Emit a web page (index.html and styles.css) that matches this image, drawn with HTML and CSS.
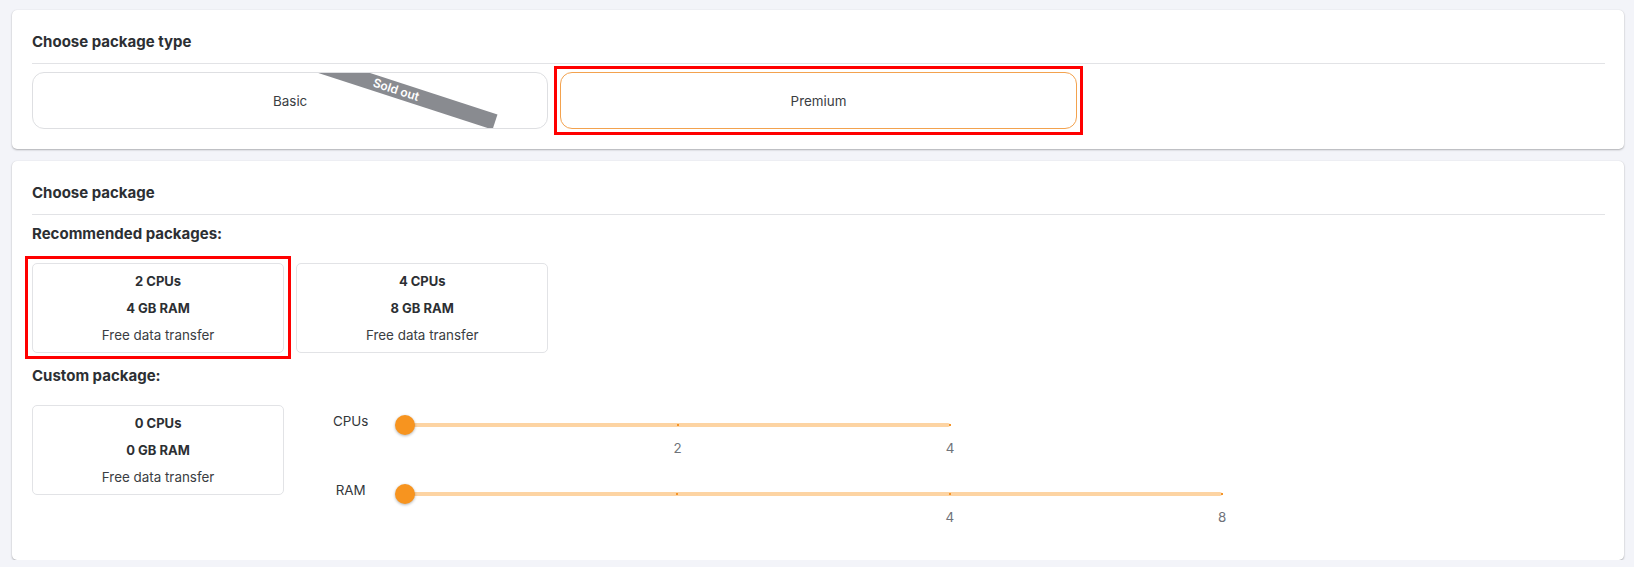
FILE: index.html
```html
<!DOCTYPE html>
<html lang="en">
<head>
<meta charset="utf-8">
<title>Choose package</title>
<link rel="stylesheet" href="styles.css">
</head>
<body>
<div class="page">
  <section class="card">
    <h2 class="card-title">Choose package type</h2>
    <div class="grid6">
      <button class="type-option has-ribbon" type="button">Basic<span class="ribbon">Sold out</span></button>
      <button class="type-option selected highlight" type="button">Premium</button>
    </div>
  </section>

  <section class="card">
    <h2 class="card-title">Choose package</h2>
    <h3 class="sub-title">Recommended packages:</h3>
    <div class="grid6 rec-grid">
      <div class="pkg highlight-pkg">
        <div class="pkg-line strong">2 CPUs</div>
        <div class="pkg-line strong">4 GB RAM</div>
        <div class="pkg-line">Free data transfer</div>
      </div>
      <div class="pkg">
        <div class="pkg-line strong">4 CPUs</div>
        <div class="pkg-line strong">8 GB RAM</div>
        <div class="pkg-line">Free data transfer</div>
      </div>
    </div>
    <h3 class="sub-title">Custom package:</h3>
    <div class="grid6">
      <div class="pkg">
        <div class="pkg-line strong">0 CPUs</div>
        <div class="pkg-line strong">0 GB RAM</div>
        <div class="pkg-line">Free data transfer</div>
      </div>
      <div class="sliders">
        <div class="slider-row">
          <span class="slider-label">CPUs</span>
          <div class="slider slider-cpu">
            <div class="rail"></div>
            <span class="tick" style="left:50%"></span>
            <span class="tick" style="left:100%"></span>
            <span class="mark-label" style="left:50%">2</span>
            <span class="mark-label" style="left:100%">4</span>
            <span class="thumb" style="left:0%"></span>
          </div>
        </div>
        <div class="slider-row last">
          <span class="slider-label">RAM</span>
          <div class="slider slider-ram">
            <div class="rail"></div>
            <span class="tick" style="left:33.333%"></span>
            <span class="tick" style="left:66.667%"></span>
            <span class="tick" style="left:100%"></span>
            <span class="mark-label" style="left:66.667%">4</span>
            <span class="mark-label" style="left:100%">8</span>
            <span class="thumb" style="left:0%"></span>
          </div>
        </div>
      </div>
    </div>
  </section>
</div>
</body>
</html>
```

FILE: styles.css
```css
* { box-sizing: border-box; }

html, body {
  margin: 0;
  padding: 0;
  background: #f3f4f9;
  font-family: Inter, "Noto Sans", "Liberation Sans", sans-serif;
  font-size: 13px;
  color: #33363a;
}

.page {
  padding: 10px 10px 0 12px;
  display: flex;
  flex-direction: column;
  gap: 12px;
}

.card {
  background: #ffffff;
  border-radius: 5px;
  box-shadow: 0 1px 2px rgba(0, 0, 0, 0.28), 0 0 1px rgba(0, 0, 0, 0.12);
  padding: 20px 19px 20px 20px;
}

.card-title {
  margin: 1px 0 8px 0;
  padding-bottom: 10px;
  border-bottom: 1px solid #e2e3e6;
  font-size: 15px;
  line-height: 22px;
  font-weight: 700;
  color: #2c2f33;
}

.sub-title {
  margin: 0 0 18px 0;
  font-size: 15px;
  line-height: 22px;
  font-weight: 700;
  color: #2c2f33;
}

.grid6 {
  display: grid;
  grid-template-columns: repeat(6, 1fr);
  column-gap: 12px;
}

.rec-grid { margin-bottom: 12px; }

.type-option {
  grid-column: span 2;
  position: relative;
  height: 57px;
  background: #ffffff;
  border: 1px solid #dedfe2;
  border-radius: 12px;
  font-family: inherit;
  font-size: 13.4px;
  color: #3a3d42;
  padding: 0;
  cursor: pointer;
}

.type-option.selected {
  border-color: #f3a24e;
}

.has-ribbon { overflow: hidden; }

.ribbon {
  position: absolute;
  left: 254px;
  top: 41px;
  width: 208px;
  height: 16px;
  line-height: 16px;
  background: #898b90;
  color: #ffffff;
  font-size: 12px;
  font-weight: 600;
  text-align: center;
  transform-origin: 100% 50%;
  transform: rotate(18deg);
}

.highlight::after,
.highlight-pkg::after {
  content: "";
  position: absolute;
  border: 3px solid #ff0000;
  pointer-events: none;
}

.highlight::after { inset: -7px; }
.highlight-pkg::after { inset: -8px -8px -7px -8px; }

.pkg {
  position: relative;
  height: 90px;
  border: 1px solid #e2e3e6;
  border-radius: 5px;
  padding: 7px 0;
  display: flex;
  flex-direction: column;
  gap: 7px;
  text-align: center;
}

.pkg-line {
  line-height: 20px;
  font-size: 13.4px;
  color: #3a3d42;
}

.pkg-line.strong {
  font-weight: 700;
  font-size: 13px;
  color: #2c2f33;
}

.sliders {
  grid-column: 2 / -1;
  display: flex;
  flex-direction: column;
}

.slider-row {
  display: flex;
  align-items: flex-start;
  height: 69px;
}

.slider-row.last { height: 66px; }

.slider-label {
  width: 109px;
  flex: none;
  text-align: center;
  line-height: 20px;
  padding-top: 6px;
  font-size: 13.4px;
  color: #33363a;
}

.slider {
  position: relative;
  height: 4px;
  margin-top: 18px;
  flex: none;
}

.slider-cpu { width: 545px; }
.slider-ram { width: 817px; }

.rail {
  height: 4px;
  border-radius: 2px;
  background: #fdd4a3;
}

.tick {
  position: absolute;
  top: 1px;
  width: 2px;
  height: 2px;
  margin-left: -1px;
  background: #f5952a;
}

.mark-label {
  position: absolute;
  top: 17px;
  line-height: 16px;
  font-size: 13.4px;
  color: #6f737a;
  transform: translateX(-50%);
}

.thumb {
  position: absolute;
  top: -8px;
  width: 20px;
  height: 20px;
  margin-left: -10px;
  border-radius: 50%;
  background: #f7941f;
  box-shadow: 0 1px 3px rgba(0, 0, 0, 0.3);
}
```
